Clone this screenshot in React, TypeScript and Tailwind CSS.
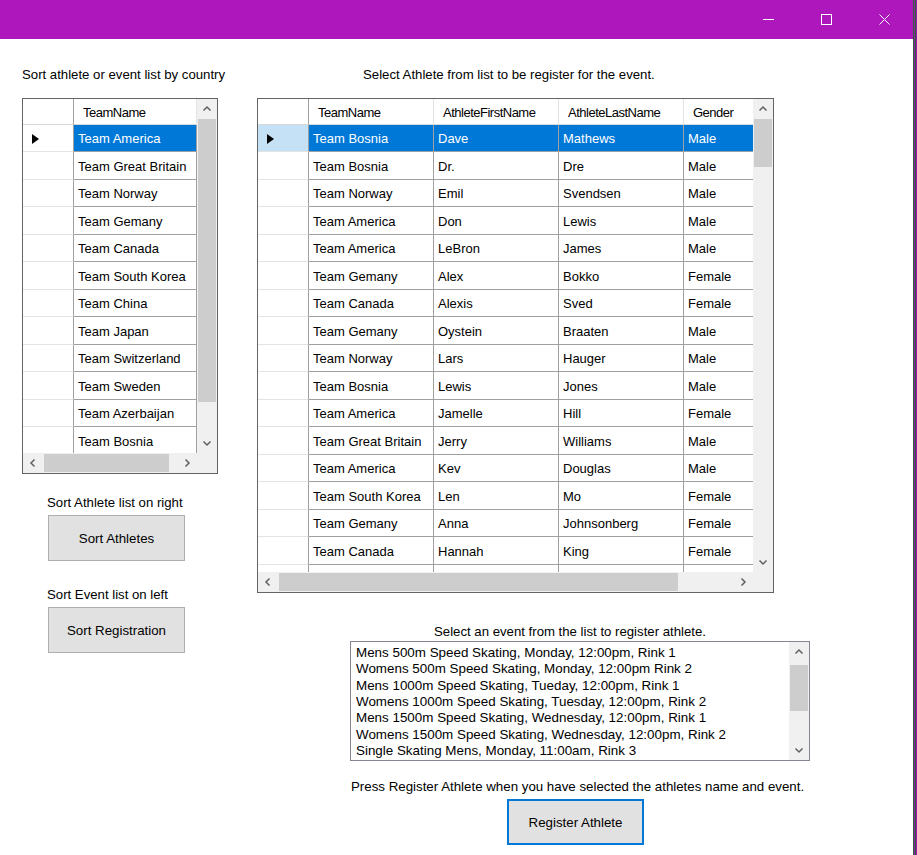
import React from 'react';

const teams = [
  'Team America',
  'Team Great Britain',
  'Team Norway',
  'Team Gemany',
  'Team Canada',
  'Team South Korea',
  'Team China',
  'Team Japan',
  'Team Switzerland',
  'Team Sweden',
  'Team Azerbaijan',
  'Team Bosnia',
];

const athletes = [
  ['Team Bosnia', 'Dave', 'Mathews', 'Male'],
  ['Team Bosnia', 'Dr.', 'Dre', 'Male'],
  ['Team Norway', 'Emil', 'Svendsen', 'Male'],
  ['Team America', 'Don', 'Lewis', 'Male'],
  ['Team America', 'LeBron', 'James', 'Male'],
  ['Team Gemany', 'Alex', 'Bokko', 'Female'],
  ['Team Canada', 'Alexis', 'Sved', 'Female'],
  ['Team Gemany', 'Oystein', 'Braaten', 'Male'],
  ['Team Norway', 'Lars', 'Hauger', 'Male'],
  ['Team Bosnia', 'Lewis', 'Jones', 'Male'],
  ['Team America', 'Jamelle', 'Hill', 'Female'],
  ['Team Great Britain', 'Jerry', 'Williams', 'Male'],
  ['Team America', 'Kev', 'Douglas', 'Male'],
  ['Team South Korea', 'Len', 'Mo', 'Female'],
  ['Team Gemany', 'Anna', 'Johnsonberg', 'Female'],
  ['Team Canada', 'Hannah', 'King', 'Female'],
  ['', '', '', ''],
];

const events = [
  'Mens 500m Speed Skating, Monday, 12:00pm, Rink 1',
  'Womens 500m Speed Skating, Monday, 12:00pm Rink 2',
  'Mens 1000m Speed Skating, Tueday, 12:00pm, Rink 1',
  'Womens 1000m Speed Skating, Tuesday, 12:00pm, Rink 2',
  'Mens 1500m Speed Skating, Wednesday, 12:00pm, Rink 1',
  'Womens 1500m Speed Skating, Wednesday, 12:00pm, Rink 2',
  'Single Skating Mens, Monday, 11:00am, Rink 3',
];

type Dir = 'up' | 'down' | 'left' | 'right';

const Chevron = ({ dir }: { dir: Dir }) => {
  const pts = {
    up: '1.5,6.5 5,3 8.5,6.5',
    down: '1.5,3.5 5,7 8.5,3.5',
    left: '6.5,1.5 3,5 6.5,8.5',
    right: '3.5,1.5 7,5 3.5,8.5',
  }[dir];
  return (
    <svg width="10" height="10" viewBox="0 0 10 10">
      <polyline points={pts} fill="none" stroke="#606060" strokeWidth="1.5" />
    </svg>
  );
};

const VScroll = ({ h, thumb }: { h: string; thumb: string }) => (
  <div className={`flex flex-col w-[20px] shrink-0 bg-[#f0f0f0] ${h}`}>
    <div className="h-[20px] flex items-center justify-center">
      <Chevron dir="up" />
    </div>
    <div className="flex-1 px-[1px]">
      <div className={`bg-[#cdcdcd] ${thumb}`} />
    </div>
    <div className="h-[20px] flex items-center justify-center">
      <Chevron dir="down" />
    </div>
  </div>
);

const HScroll = ({ w, thumb }: { w: string; thumb: string }) => (
  <div className={`flex h-[20px] bg-[#f0f0f0] ${w}`}>
    <div className="w-[20px] flex items-center justify-center">
      <Chevron dir="left" />
    </div>
    <div className="flex-1 py-[1px] pl-[1px]">
      <div className={`h-full bg-[#cdcdcd] ${thumb}`} />
    </div>
    <div className="w-[20px] flex items-center justify-center">
      <Chevron dir="right" />
    </div>
  </div>
);

const Triangle = () => (
  <svg width="7" height="10" viewBox="0 0 7 10">
    <polygon points="0,0 7,5 0,10" fill="#000" />
  </svg>
);

type Col = { title: string; w: string; open?: boolean };

const Grid = ({
  cols,
  rows,
  bodyH,
  contentW,
  vH,
  vThumb,
  hThumb,
  selHead,
}: {
  cols: Col[];
  rows: string[][];
  bodyH: string;
  contentW: string;
  vH: string;
  vThumb: string;
  hThumb: string;
  selHead: string;
}) => (
  <div className="inline-flex flex-col border border-[#646464] bg-[#f0f0f0]">
    <div className="flex">
      <div className={`flex flex-col bg-white ${contentW}`}>
        <div className="flex h-[26px] shrink-0">
          <div className="w-[51px] shrink-0 border-r border-r-[#a0a0a0] border-b border-b-[#d8d8d8] bg-white" />
          {cols.map((c) => (
            <div
              key={c.title}
              className={`${c.w} shrink-0 ${c.open ? '' : 'border-r border-r-[#e3e3e3]'} border-b border-b-[#d8d8d8] bg-white flex items-center pl-[9px] pt-[2px] tracking-[-0.5px] whitespace-nowrap overflow-hidden`}
            >
              {c.title}
            </div>
          ))}
        </div>
        <div className={`flex flex-col overflow-hidden ${bodyH}`}>
          {rows.map((r, i) => {
            const sel = i === 0;
            return (
              <div key={i} className={`flex shrink-0 ${i % 2 ? 'h-[28px]' : 'h-[27px]'}`}>
                <div
                  className={`w-[51px] shrink-0 border-r border-r-[#a0a0a0] border-b border-b-[#e3e3e3] flex items-center pl-[9px] pt-[1px] ${sel ? selHead : 'bg-white'}`}
                >
                  {sel && <Triangle />}
                </div>
                {cols.map((c, j) => (
                  <div
                    key={j}
                    className={`${c.w} shrink-0 ${c.open ? '' : 'border-r'} border-b border-[#a0a0a0] flex items-center pl-[4px] pt-[2px] whitespace-nowrap overflow-hidden ${sel ? 'bg-[#0078d7] text-white' : 'bg-white text-black'}`}
                  >
                    {r[j]}
                  </div>
                ))}
              </div>
            );
          })}
        </div>
      </div>
      <VScroll h={vH} thumb={vThumb} />
    </div>
    <div className="flex">
      <HScroll w={contentW} thumb={hThumb} />
      <div className="w-[20px] h-[20px] bg-[#f0f0f0]" />
    </div>
  </div>
);

const WinButton = ({ label, extra }: { label: string; extra: string }) => (
  <button className={`w-[137px] h-[46px] bg-[#e1e1e1] flex items-center justify-center pt-[2px] text-black text-[13.3px] ${extra}`}>
    {label}
  </button>
);

const TitleBar = () => (
  <div className="h-[39px] shrink-0 bg-[#ad17bb] flex justify-end items-center">
    <div className="w-[58px] h-full flex items-center justify-center">
      <svg width="11" height="11" viewBox="0 0 11 11">
        <line x1="0" y1="5.5" x2="11" y2="5.5" stroke="#fff" strokeWidth="1" />
      </svg>
    </div>
    <div className="w-[58px] h-full flex items-center justify-center">
      <svg width="11" height="11" viewBox="0 0 11 11">
        <rect x="0.5" y="0.5" width="10" height="10" fill="none" stroke="#fff" strokeWidth="1" />
      </svg>
    </div>
    <div className="w-[58px] h-full flex items-center justify-center">
      <svg width="11" height="11" viewBox="0 0 11 11">
        <path d="M0.5 0.5 L10.5 10.5 M10.5 0.5 L0.5 10.5" stroke="#fff" strokeWidth="1" />
      </svg>
    </div>
  </div>
);

const App = () => {
  return (
    <div className="flex w-[917px] h-[855px] overflow-hidden bg-white font-['Liberation_Sans',Arial,sans-serif] text-[13px] text-black">
      <div className="flex flex-col w-[913px] h-full bg-white">
        <TitleBar />
        <div className="flex pt-[27px]">
          {/* left side: country list and sort buttons */}
          <div className="ml-[22px] w-[196px] flex flex-col shrink-0">
            <div className="h-[16px] leading-[18px] text-[13.2px] whitespace-nowrap">Sort athlete or event list by country</div>
            <div className="mt-[16px]">
              <Grid
                cols={[{ title: 'TeamName', w: 'w-[123px]' }]}
                rows={teams.map((t) => [t])}
                bodyH="h-[328px]"
                contentW="w-[174px]"
                vH="h-[354px]"
                vThumb="h-[283px]"
                hThumb="w-[125px]"
                selHead="bg-white"
              />
            </div>
            <div className="ml-[25px] mt-[20px] h-[16px] leading-[18px] text-[13.2px] whitespace-nowrap">Sort Athlete list on right</div>
            <WinButton label="Sort Athletes" extra="ml-[26px] mt-[5px] border border-[#adadad]" />
            <div className="ml-[25px] mt-[25px] h-[16px] leading-[18px] text-[13.2px] whitespace-nowrap">Sort Event list on left</div>
            <WinButton label="Sort Registration" extra="ml-[26px] mt-[5px] border border-[#adadad]" />
          </div>

          {/* right side: athletes, events, register */}
          <div className="ml-[39px] flex flex-col">
            <div className="pl-[106px] h-[16px] leading-[18px] text-[13.2px] whitespace-nowrap">
              Select Athlete from list to be register for the event.
            </div>
            <div className="mt-[16px]">
              <Grid
                cols={[
                  { title: 'TeamName', w: 'w-[125px]' },
                  { title: 'AthleteFirstName', w: 'w-[125px]' },
                  { title: 'AthleteLastName', w: 'w-[125px]' },
                  { title: 'Gender', w: 'w-[69px]', open: true },
                ]}
                rows={athletes}
                bodyH="h-[447px]"
                contentW="w-[495px]"
                vH="h-[473px]"
                vThumb="h-[48px]"
                hThumb="w-[399px]"
                selHead="bg-[#c4e1f6]"
              />
            </div>

            <div className="ml-[93px] w-[460px] flex flex-col">
              <div className="mt-[30px] pl-[84px] h-[16px] leading-[18px] text-[13.2px] whitespace-nowrap">
                Select an event from the list to register athlete.
              </div>
              <div className="mt-[2px] h-[120px] border border-[#828790] flex bg-white">
                <div className="flex-1 pl-[5px] pt-[3px] overflow-hidden text-[13.4px]">
                  {events.map((e) => (
                    <div key={e} className="h-[16.33px] leading-[16.33px] whitespace-nowrap">
                      {e}
                    </div>
                  ))}
                </div>
                <div className="flex flex-col w-[20px] h-full bg-[#f0f0f0]">
                  <div className="h-[20px] flex items-center justify-center">
                    <Chevron dir="up" />
                  </div>
                  <div className="flex-1 px-[1px] pt-[3px]">
                    <div className="h-[46px] bg-[#cdcdcd]" />
                  </div>
                  <div className="h-[20px] flex items-center justify-center">
                    <Chevron dir="down" />
                  </div>
                </div>
              </div>
              <div className="mt-[17px] pl-[1px] h-[16px] leading-[18px] text-[13.3px] whitespace-nowrap">
                Press Register Athlete when you have selected the athletes name and event.
              </div>
              <WinButton label="Register Athlete" extra="ml-[157px] mt-[5px] border-2 border-[#0078d7]" />
            </div>
          </div>
        </div>
      </div>
      {/* window frame edge */}
      <div className="w-[1px] h-full bg-[#2e5f3e]" />
      <div className="w-[1px] h-full bg-[#9a1aa8]" />
      <div className="w-[1px] h-full bg-[#2e5f3e]" />
      <div className="w-[1px] h-full bg-[#9a1aa8]" />
    </div>
  );
};

export default App;
